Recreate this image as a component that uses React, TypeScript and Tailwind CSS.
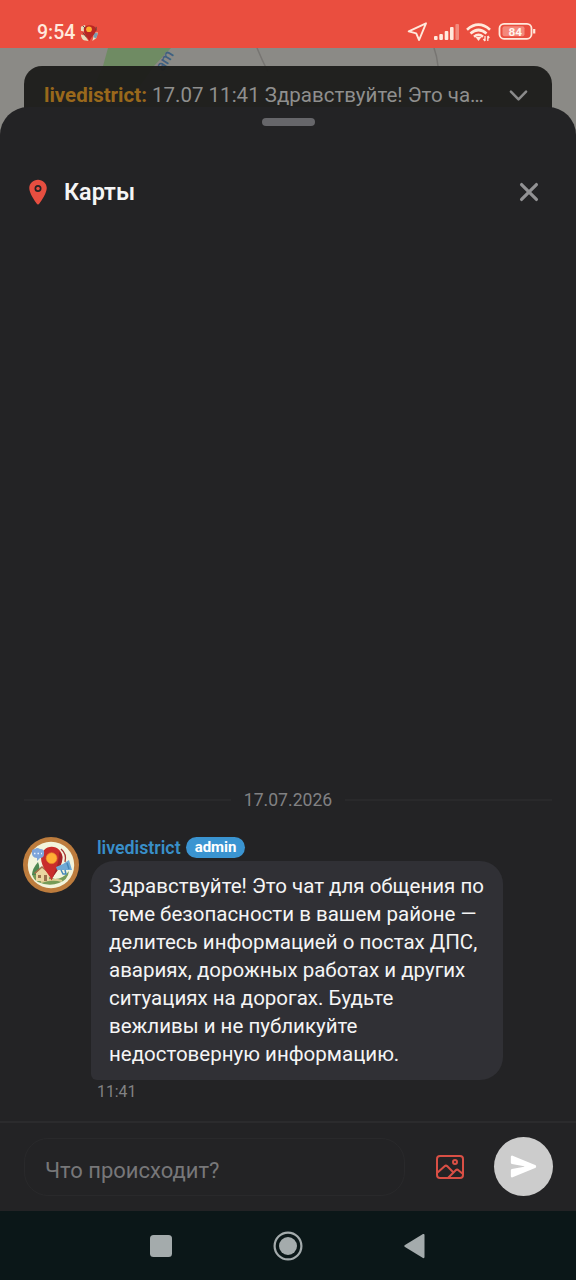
import { IoChevronDown, IoClose, IoImageOutline, IoLocation, IoSend } from 'react-icons/io5';

const message = {
  author: 'livedistrict',
  role: 'admin',
  date: '17.07.2026',
  time: '11:41',
  lines: [
    'Здравствуйте! Это чат для общения по',
    'теме безопасности в вашем районе —',
    'делитесь информацией о постах ДПС,',
    'авариях, дорожных работах и других',
    'ситуациях на дорогах. Будьте',
    'вежливы и не публикуйте',
    'недостоверную информацию.',
  ],
};

function DistrictLogo({ className }: { className: string }) {
  return (
    <svg viewBox="0 0 56 56" className={className}>
      <circle cx="28" cy="28" r="28" fill="#bd7c3d" />
      <circle cx="28" cy="28" r="23.2" fill="#f3f4dc" />
      {/* grass and road */}
      <path d="M9 37Q14 34 20 38L32 42Q40 42 46 34Q45 43 36 46Q26 50 15 45Q10 42 9 37Z" fill="#779b57" />
      <path d="M9 38Q9 32 15 25Q18 32 15 38Z" fill="#4f8852" />
      <path d="M18 45Q29 41 39 44" stroke="#dbcb8f" strokeWidth="2" fill="none" />
      {/* house */}
      <path d="M13 36L19 30L26 36V44H13Z" fill="#ead6a0" />
      <path d="M11.5 36.5L19 30L27 36.5" stroke="#a66f49" strokeWidth="1.6" fill="none" />
      <path d="M15 38h3v3h-3zM21 38h3v6h-3z" fill="#99734e" />
      {/* pin */}
      <path d="M38 12Q44 17 42 25" stroke="#a53732" strokeWidth="1.3" fill="none" />
      <path d="M28.5 43.5C26 36 18 31 18 20.5a10.7 10.7 0 0 1 21.4 0C39.4 30 31 36 28.5 43.5Z" fill="#c92d2b" />
      <path d="M28.5 43.5C31 35 36 29 36 15Q39.4 17 39.4 20.5C39.4 30 31 36 28.5 43.5Z" fill="#9f2529" />
      <circle cx="28.6" cy="21.2" r="5.4" fill="#ffae35" stroke="#e78d2d" strokeWidth="0.7" />
      {/* speech bubble */}
      <path d="M9 14Q9 12 12 12Q14 10 17 12Q22 12 21 17Q21 21 17 21L14 24V21Q8 21 9 14Z" fill="#7da5da" />
      <path d="M11 16.5h1.5m2 0h1.5m2 0h1" stroke="#e8f1ff" strokeWidth="1.4" />
      {/* megaphone */}
      <path d="M33 30L40 27L46 23L49 33L41 33L34 33Z" fill="#6fa9d5" />
      <path d="M38 33l2 4h3l-1-4M44 26l2 6" stroke="#4588b9" strokeWidth="1.5" fill="none" />
    </svg>
  );
}

function StatusBar() {
  return (
    <header className="relative z-10 flex h-12 shrink-0 items-end bg-[#ea4e3f] pb-[5px] pl-[37px] pr-10 text-[#ffe9dc]">
      <span className="mr-[5px] text-[19.5px] font-medium leading-5">9:54</span>
      <svg viewBox="0 0 20 20" className="h-[19px] w-[19px]">
        <path d="M1 3l4-2 2 3-3 4-3-1zM1 11l4 1 4 6-5-1q-3-2-3-6zM15 9h4l-2 6-4 3z" fill="#e9ddbd" />
        <path d="M15 9l4 1-2 5-3-1z" fill="#789cb2" />
        <path d="M10 18C7 13 4 10 4 5.5C4 0 16 0 17 5.5C17 10 12 13 10 18Z" fill="#b92624" />
        <path d="M3 2l2 2M3 9l4 5M17 3v4" stroke="#60423b" strokeWidth="1" />
        <circle cx="9.5" cy="5.5" r="3" fill="#ffad2d" />
      </svg>
      <svg viewBox="0 0 130 22" className="ml-auto h-[22px] w-[130px] shrink-0" fill="none" stroke="currentColor">
        {/* location arrow */}
        <path d="M2.7 10.4L20 2.3L13.1 19L10.2 12.3Z" strokeWidth="1.9" strokeLinejoin="round" />
        {/* signal */}
        <g fill="currentColor" stroke="none">
          <rect x="28" y="15" width="3.6" height="4" rx="1" />
          <rect x="33.3" y="13" width="3.6" height="6" rx="1" />
          <rect x="38.7" y="10" width="3.6" height="9" rx="1" />
          <rect x="44" y="6" width="3.6" height="13" rx="1" />
          <rect x="49.4" y="3" width="3.6" height="16" rx="1" opacity="0.4" />
        </g>
        {/* wifi */}
        <path d="M61 8.7Q72.5-1.3 84 8.7M64.5 12.5Q72.5 5.5 80.5 12.5M68 15.7Q72.5 12.1 77 15.7" strokeWidth="2.7" />
        <path d="M69.5 16h6L72.5 20z" fill="currentColor" stroke="none" />
        <path d="M79 15v5M79 20l-1.5-2M81.8 20v-5M81.8 15l1.5 2" strokeWidth="1.3" />
        {/* battery */}
        <rect x="93.5" y="2.8" width="32" height="15" rx="4.5" strokeWidth="1.8" />
        <rect x="96.5" y="5.3" width="22" height="10" rx="2" fill="#f4887b" stroke="none" />
        <path d="M128.2 8v4.5" strokeWidth="2.2" />
        <text x="109.3" y="14.5" textAnchor="middle" fontSize="11.8" fontWeight="700" fill="#fff5ee" stroke="none">84</text>
      </svg>
    </header>
  );
}

function MapPreview() {
  return (
    <section className="relative h-[95px] shrink-0 overflow-hidden bg-[#8b8a86] px-6 pt-[18px]">
      <svg viewBox="0 0 576 95" className="absolute inset-0 h-full w-full">
        <path d="M108 0H171L154 18L130 52H88L103 18Z" fill="#6f8b63" />
        <path d="M257 0Q262 12 268 24M434 0Q437 8 438 18" stroke="#777572" strokeWidth="1.5" fill="none" />
        <text x="163" y="24" fontSize="15" fontWeight="500" fill="#3f5f80" transform="rotate(-58 163 24)">am</text>
      </svg>
      <div className="relative flex h-20 items-start rounded-[18px] bg-[#1b1b19]/95 px-5 pt-[17px]">
        <p className="w-[461px] shrink-0 whitespace-nowrap text-[20.5px] leading-6 text-[#8f8f8e]">
          <span className="font-bold text-[#99681b]">livedistrict:</span> 17.07 11:41 Здравствуйте! Это ча…
        </p>
        <IoChevronDown className="-mt-px h-[27px] w-[27px] shrink-0 text-[#8b8b8b]" />
      </div>
    </section>
  );
}

function Message() {
  return (
    <article className="-ml-px flex items-start">
      <DistrictLogo className="mt-px h-14 w-14 shrink-0" />
      <div className="ml-3">
        <div className="flex h-[25px] items-center pb-0.5 pl-1.5">
          <span className="text-[17.8px] font-semibold leading-5 text-[#398fc9]">{message.author}</span>
          <span className="ml-[5px] flex h-[21px] items-center rounded-full bg-[#3a94d1] px-[9px] text-[15px] font-bold text-white">
            {message.role}
          </span>
        </div>
        <div className="h-[219px] w-[412px] rounded-[23px] rounded-bl-[6px] bg-[#303035] pl-[18px] pt-[11px] text-[20.5px] leading-7 text-[#f5f5f5]">
          {message.lines.map((line) => (
            <p key={line} className="whitespace-nowrap">{line}</p>
          ))}
        </div>
        <time className="mt-0.5 block pl-1.5 text-[15.8px] leading-5 text-[#828284]">{message.time}</time>
      </div>
    </article>
  );
}

function Composer() {
  return (
    <div className="flex h-[90px] shrink-0 items-center border-t-2 border-[#2b2b2d] px-6">
      <input
        placeholder="Что происходит?"
        className="h-[58px] w-[382px] rounded-[24px] border border-[#29292b] bg-transparent px-5 pt-1.5 text-[22px] text-[#eee] outline-none placeholder:text-[#777779]"
      />
      <button className="ml-7 h-8 w-8">
        <IoImageOutline className="h-8 w-8 translate-x-px text-[#d94f45]" />
      </button>
      <button className="-mt-px ml-7 flex h-[59px] w-[59px] shrink-0 translate-x-px items-center justify-center rounded-full bg-[#cccccc]">
        <IoSend className="h-[27px] w-[27px] text-white" />
      </button>
    </div>
  );
}

function NavigationBar() {
  return (
    <nav className="flex h-[69px] shrink-0 items-center justify-between bg-[#0b1718] pl-[150px] pr-[151px] text-[#a4abac]">
      <svg viewBox="0 0 22 22" className="h-[22px] w-[22px]" fill="currentColor">
        <rect width="22" height="22" rx="3.5" />
      </svg>
      <svg viewBox="0 0 30 30" className="h-[30px] w-[30px]">
        <circle cx="15" cy="15" r="13.4" fill="none" stroke="currentColor" strokeWidth="2.2" />
        <circle cx="15" cy="15" r="9" fill="currentColor" />
      </svg>
      <svg viewBox="0 0 21 26" className="h-[26px] w-[21px]" fill="currentColor">
        <path d="M1 12L19 1Q20.5.5 20.5 2V24Q20.5 25.5 19 25L1 14Q-.5 13 1 12Z" />
      </svg>
    </nav>
  );
}

export default function App() {
  return (
    <div className="flex h-[1280px] w-[576px] flex-col overflow-hidden bg-[#232325] font-['Roboto',sans-serif]">
      <StatusBar />
      <MapPreview />
      <main className="relative -mt-9 flex min-h-0 flex-1 flex-col rounded-t-[28px] bg-[#232325]">
        <div className="mx-auto mt-[11px] h-2 w-[53px] shrink-0 rounded-full bg-[#66666a]" />
        <div className="mt-[46px] flex h-10 shrink-0 items-center pl-6 pr-[31px]">
          <IoLocation className="h-7 w-7 text-[#e64e40]" />
          <h1 className="ml-3 text-[23.4px] font-semibold leading-7 text-[#f5f5f5]">Карты</h1>
          <IoClose className="ml-auto h-[34px] w-[34px] translate-x-px text-[#929294]" />
        </div>
        <div className="flex min-h-0 flex-1 flex-col justify-end px-6 pb-[19px]">
          <div className="mb-6 flex items-center gap-[13px] text-[17.6px] leading-6 text-[#818183]">
            <span className="h-0.5 flex-1 bg-[#29292b]" />
            {message.date}
            <span className="h-0.5 flex-1 bg-[#29292b]" />
          </div>
          <Message />
        </div>
        <Composer />
      </main>
      <NavigationBar />
    </div>
  );
}
